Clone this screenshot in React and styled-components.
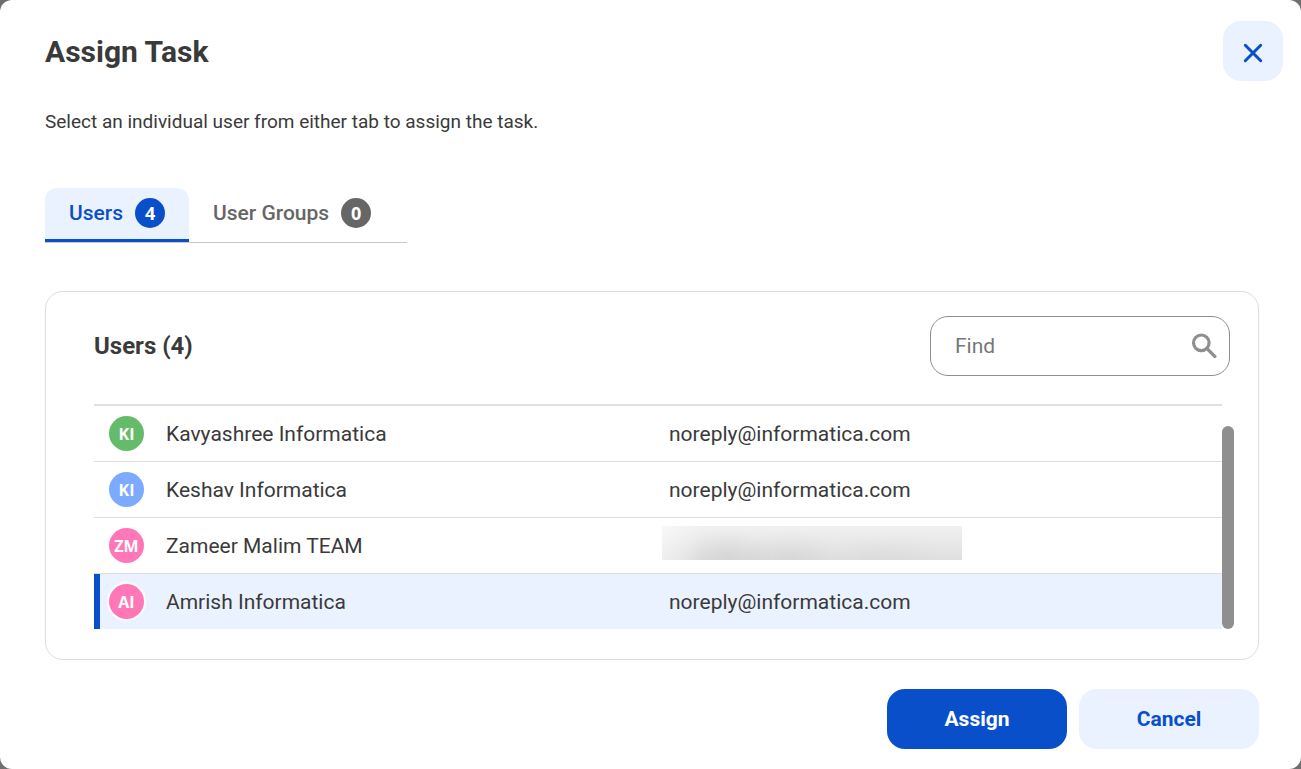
import React, { useState } from 'react';
import styled, { createGlobalStyle } from 'styled-components';

const users = [
  { id: 1, initials: 'KI', color: '#66bb6a', name: 'Kavyashree Informatica', email: 'noreply@informatica.com' },
  { id: 2, initials: 'KI', color: '#7baaff', name: 'Keshav Informatica', email: 'noreply@informatica.com' },
  { id: 3, initials: 'ZM', color: '#ff77b7', name: 'Zameer Malim TEAM', email: null },
  { id: 4, initials: 'AI', color: '#ff77b7', name: 'Amrish Informatica', email: 'noreply@informatica.com' },
];

const App = () => {
  const [tab, setTab] = useState('users');
  const [selected, setSelected] = useState(4);
  const [query, setQuery] = useState('');

  return (
    <>
      <GlobalStyle />
      <Dialog role="dialog" aria-labelledby="dialog-title">
        <Header>
          <Title id="dialog-title">Assign Task</Title>
          <CloseButton type="button" aria-label="Close">
            <svg width="20" height="20" viewBox="0 0 20 20" aria-hidden="true">
              <path d="M2.3 2.3l15.4 15.4M17.7 2.3l-15.4 15.4" stroke="currentColor" strokeWidth="3" strokeLinecap="round" />
            </svg>
          </CloseButton>
        </Header>
        <Body>
          <Hint>Select an individual user from either tab to assign the task.</Hint>
          <Tabs role="tablist">
            <Tab type="button" role="tab" aria-selected={tab === 'users'} $active={tab === 'users'} onClick={() => setTab('users')}>
              Users
              <Count $active={tab === 'users'}>4</Count>
            </Tab>
            <Tab type="button" role="tab" aria-selected={tab === 'groups'} $active={tab === 'groups'} onClick={() => setTab('groups')}>
              User Groups
              <Count $active={tab === 'groups'}>0</Count>
            </Tab>
          </Tabs>
          <Panel>
            <Toolbar>
              <PanelTitle>Users (4)</PanelTitle>
              <SearchBox>
                <SearchInput
                  type="text"
                  aria-label="Find"
                  placeholder="Find"
                  value={query}
                  onChange={(e) => setQuery(e.target.value)}
                />
                <svg width="26" height="26" viewBox="0 0 26 26" fill="none" stroke="#8f8f8f" aria-hidden="true">
                  <circle cx="10.3" cy="9.8" r="7.8" strokeWidth="3.2" />
                  <path d="M16 15.6l7.8 7.8" strokeWidth="3.4" strokeLinecap="round" />
                </svg>
              </SearchBox>
            </Toolbar>
            <List>
              <Table>
                <tbody>
                  {users.map((user) => (
                    <Row key={user.id} $selected={user.id === selected} onClick={() => setSelected(user.id)}>
                      <Cell>
                        <Person>
                          <Avatar $color={user.color} $selected={user.id === selected}>{user.initials}</Avatar>
                          {user.name}
                        </Person>
                      </Cell>
                      <Cell>{user.email ? <Email>{user.email}</Email> : <Redacted aria-label="Hidden email" />}</Cell>
                    </Row>
                  ))}
                </tbody>
              </Table>
              <ScrollThumb />
            </List>
          </Panel>
          <Footer>
            <Button type="button" $primary>Assign</Button>
            <Button type="button">Cancel</Button>
          </Footer>
        </Body>
      </Dialog>
    </>
  );
};

const GlobalStyle = createGlobalStyle`
  * {
    box-sizing: border-box;
  }
  body {
    margin: 0;
    background: #6f6f6f;
    color: #3a3a3a;
    font-family: Roboto, 'Liberation Sans', sans-serif;
    font-size: 21px;
    line-height: 24px;
  }
  button,
  input {
    font: inherit;
  }
`;

const Dialog = styled.main`
  min-height: 100vh;
  background: #fff;
  border-radius: 12px;
`;

const Header = styled.header`
  display: flex;
  justify-content: space-between;
  align-items: center;
  padding: 21px 18px 0 45px;
`;

const Title = styled.h1`
  margin: 0;
  padding-top: 2px;
  font-size: 30px;
  line-height: 36px;
  font-weight: 700;
`;

const CloseButton = styled.button`
  display: flex;
  align-items: center;
  justify-content: center;
  width: 60px;
  height: 60px;
  padding: 4px 0 0;
  border: 0;
  border-radius: 18px;
  background: #ebf2ff;
  color: #0a4fca;
  cursor: pointer;
`;

const Body = styled.div`
  padding: 29px 42px 20px 45px;
`;

const Hint = styled.p`
  margin: 0 0 54px;
  font-size: 19px;
`;

const Tabs = styled.div`
  display: inline-flex;
  padding-right: 12px;
  border-bottom: 1px solid #c8c8c8;
  vertical-align: top;
`;

const Tab = styled.button`
  display: flex;
  align-items: center;
  gap: 12px;
  padding: 8px 24px 10px;
  height: 54px;
  border: 0;
  border-bottom: 3px solid ${({ $active }) => ($active ? '#0a4fca' : 'transparent')};
  border-radius: 12px 12px 0 0;
  background: ${({ $active }) => ($active ? '#ebf2ff' : 'transparent')};
  color: ${({ $active }) => ($active ? '#0a4fca' : '#666')};
  font-weight: 500;
  cursor: pointer;
`;

const Count = styled.span`
  width: 30px;
  height: 30px;
  border-radius: 50%;
  background: ${({ $active }) => ($active ? '#0a4fca' : '#666')};
  color: #fff;
  font-family: 'Open Sans', sans-serif;
  font-size: 18px;
  line-height: 30px;
  font-weight: 700;
  text-align: center;
`;

const Panel = styled.section`
  margin-top: 48px;
  padding: 24px 24px 30px 48px;
  border: 1px solid #dedede;
  border-radius: 18px;
`;

const Toolbar = styled.div`
  display: flex;
  align-items: center;
  justify-content: space-between;
  padding-right: 4px;
`;

const PanelTitle = styled.h2`
  margin: 0;
  font-size: 24px;
  line-height: 30px;
  font-weight: 700;
`;

const SearchBox = styled.div`
  display: flex;
  align-items: center;
  width: 300px;
  height: 60px;
  padding: 0 12px 0 24px;
  border: 1px solid #8f8f8f;
  border-radius: 18px;
`;

const SearchInput = styled.input`
  flex: 1;
  min-width: 0;
  padding: 0;
  border: 0;
  outline: 0;
  background: transparent;
  color: inherit;

  &::placeholder {
    color: #777;
    opacity: 1;
  }
`;

const List = styled.div`
  display: flex;
  margin-top: 28px;
`;

const Table = styled.table`
  flex: 1;
  border-collapse: separate;
  border-spacing: 0;
  table-layout: fixed;
  border-top: 2px solid #e0e0e0;
`;

const Row = styled.tr`
  background: ${({ $selected }) => ($selected ? '#ebf2ff' : 'transparent')};
  cursor: pointer;

  td:first-child {
    box-shadow: ${({ $selected }) => ($selected ? 'inset 6px 0 #0a4fca' : 'none')};
  }
  &:last-child td {
    height: 55px;
    border-bottom: 0;
  }
`;

const Cell = styled.td`
  width: 50%;
  height: 56px;
  padding: 0 0 0 4px;
  border-bottom: 1px solid #dedede;

  &:first-child {
    padding-left: 15px;
  }
`;

const Person = styled.div`
  display: flex;
  align-items: center;
  gap: 22px;
`;

const Avatar = styled.span`
  width: 35px;
  height: 35px;
  border-radius: 50%;
  background: ${({ $color }) => $color};
  box-shadow: ${({ $selected }) => ($selected ? '0 0 0 2px #fff' : 'none')};
  color: #fff;
  font-family: 'Open Sans', sans-serif;
  font-size: 16px;
  line-height: 36px;
  font-weight: 700;
  text-align: center;
`;

const Email = styled.span`
  padding-left: 7px;
`;

const Redacted = styled.div`
  width: 300px;
  height: 34px;
  margin-bottom: 5px;
  background:
    radial-gradient(ellipse 44px 26px at 66px 29px, rgba(0, 0, 0, 0.05), transparent),
    radial-gradient(ellipse 50px 26px at 128px 29px, rgba(0, 0, 0, 0.04), transparent),
    radial-gradient(ellipse 60px 24px at 222px 28px, rgba(0, 0, 0, 0.02), transparent),
    linear-gradient(90deg, rgba(255, 255, 255, 0.5), transparent 40px),
    linear-gradient(#f1f1f1, #dfdfdf);
`;

const ScrollThumb = styled.div`
  width: 12px;
  margin-top: 22px;
  border-radius: 6px;
  background: #8f8f8f;
`;

const Footer = styled.footer`
  display: flex;
  justify-content: flex-end;
  gap: 12px;
  margin-top: 29px;
`;

const Button = styled.button`
  width: 180px;
  height: 60px;
  border: 0;
  border-radius: 18px;
  background: ${({ $primary }) => ($primary ? '#0a4fca' : '#ebf2ff')};
  color: ${({ $primary }) => ($primary ? '#fff' : '#0a4fca')};
  font-weight: 700;
  cursor: pointer;
`;

export default App;
